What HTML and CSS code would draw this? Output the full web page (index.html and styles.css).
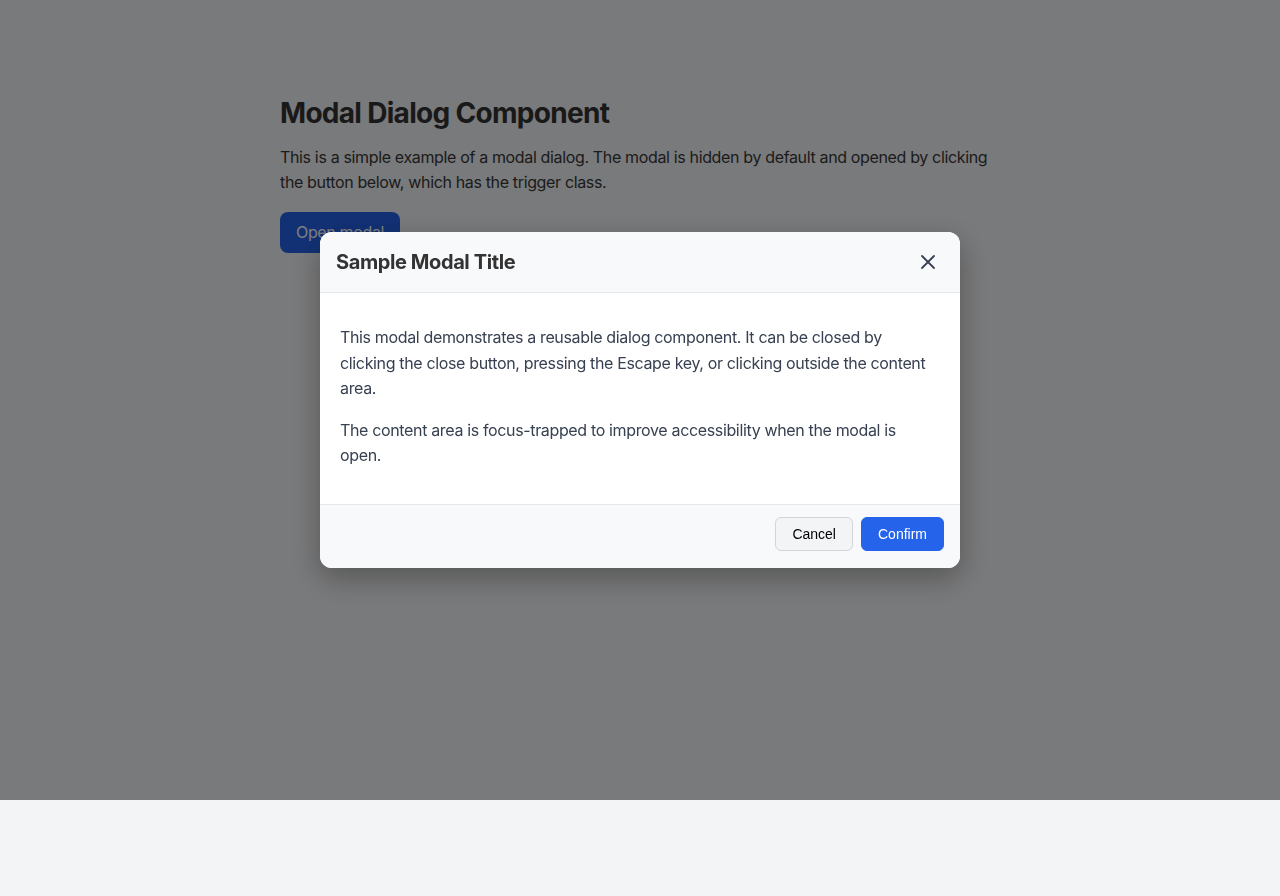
FILE: index.html
```html
<!DOCTYPE html>
<html lang="en">
<head>
<meta charset="utf-8">
<title>Modal Dialog Component</title>
<link rel="stylesheet" href="styles.css">
</head>
<body>
<main class="container">
  <h1 class="page-title">Modal Dialog Component</h1>
  <p class="intro">This is a simple example of a modal dialog. The modal is hidden by default and opened by clicking the button below, which has the trigger class.</p>
  <button class="trigger" type="button">Open modal</button>
</main>

<div class="overlay">
  <div class="modal" role="dialog" aria-modal="true" aria-labelledby="modal-title">
    <header class="modal-header">
      <h2 class="modal-title" id="modal-title">Sample Modal Title</h2>
      <button class="modal-close" type="button" aria-label="Close">
        <svg width="16" height="16" viewBox="0 0 16 16" fill="none" stroke="currentColor" stroke-width="1.8" stroke-linecap="round">
          <path d="M2 2L14 14M14 2L2 14"/>
        </svg>
      </button>
    </header>
    <div class="modal-body">
      <p>This modal demonstrates a reusable dialog component. It can be closed by clicking the close button, pressing the Escape key, or clicking outside the content area.</p>
      <p>The content area is focus-trapped to improve accessibility when the modal is open.</p>
    </div>
    <footer class="modal-footer">
      <button class="btn btn-secondary" type="button">Cancel</button>
      <button class="btn btn-primary" type="button">Confirm</button>
    </footer>
  </div>
</div>
</body>
</html>
```

FILE: styles.css
```css
html {
  background: #f3f4f6;
}

body {
  margin: 0;
  padding: 32px;
  font-family: Inter, "Noto Sans", "Liberation Sans", sans-serif;
  letter-spacing: -0.35px;
  color: #333;
  background: #f3f4f6;
}

.container {
  max-width: 720px;
  margin: 65px auto 64px;
}

.page-title {
  margin: 0 0 14px;
  font-size: 28px;
  line-height: 1.2;
  font-weight: 700;
  letter-spacing: -0.7px;
  color: #333;
}

.intro {
  margin: 0 0 16px;
  font-size: 16px;
  line-height: 1.6;
  color: #383838;
}

.trigger {
  font-family: Inter, "Noto Sans", sans-serif;
  font-size: 16px;
  line-height: 1.3;
  letter-spacing: -0.35px;
  padding: 10px 16px;
  border: 0;
  border-radius: 8px;
  background: #2563eb;
  color: #fff;
}

.overlay {
  position: fixed;
  top: 0;
  left: 0;
  width: 100%;
  height: 800px;
  background: rgba(0, 0, 0, 0.5);
  display: flex;
  align-items: center;
  justify-content: center;
}

.modal {
  width: 640px;
  background: #fff;
  border-radius: 12px;
  overflow: hidden;
  box-shadow: 0 10px 30px rgba(0, 0, 0, 0.3);
}

.modal-header {
  display: flex;
  align-items: center;
  justify-content: space-between;
  padding: 16px;
  background: #f8f9fb;
  border-bottom: 1px solid #e5e7eb;
}

.modal-title {
  margin: 0;
  font-size: 20px;
  line-height: 28px;
  font-weight: 700;
  letter-spacing: -0.4px;
  color: #333;
}

.modal-close {
  width: 32px;
  height: 32px;
  display: flex;
  align-items: center;
  justify-content: center;
  margin: -2px 0;
  padding: 0;
  border: 0;
  background: transparent;
  color: #374151;
}

.modal-body {
  padding: 16px 20px 19px;
  font-size: 16px;
  line-height: 1.6;
  color: #374151;
}

.modal-body p {
  margin: 16px 0;
}

.modal-footer {
  display: flex;
  justify-content: flex-end;
  gap: 8px;
  padding: 12px 16px 17px;
  background: #f8f9fb;
  border-top: 1px solid #e5e7eb;
}

.btn {
  font-family: "Liberation Sans", Arial, sans-serif;
  font-size: 14px;
  line-height: 16px;
  letter-spacing: 0;
  padding: 8px 16px;
  border-radius: 6px;
  border: 1px solid;
}

.btn-secondary {
  background: #f3f4f6;
  border-color: #d1d5db;
  color: #000;
}

.btn-primary {
  background: #2563eb;
  border-color: #2563eb;
  color: #fff;
}
```
